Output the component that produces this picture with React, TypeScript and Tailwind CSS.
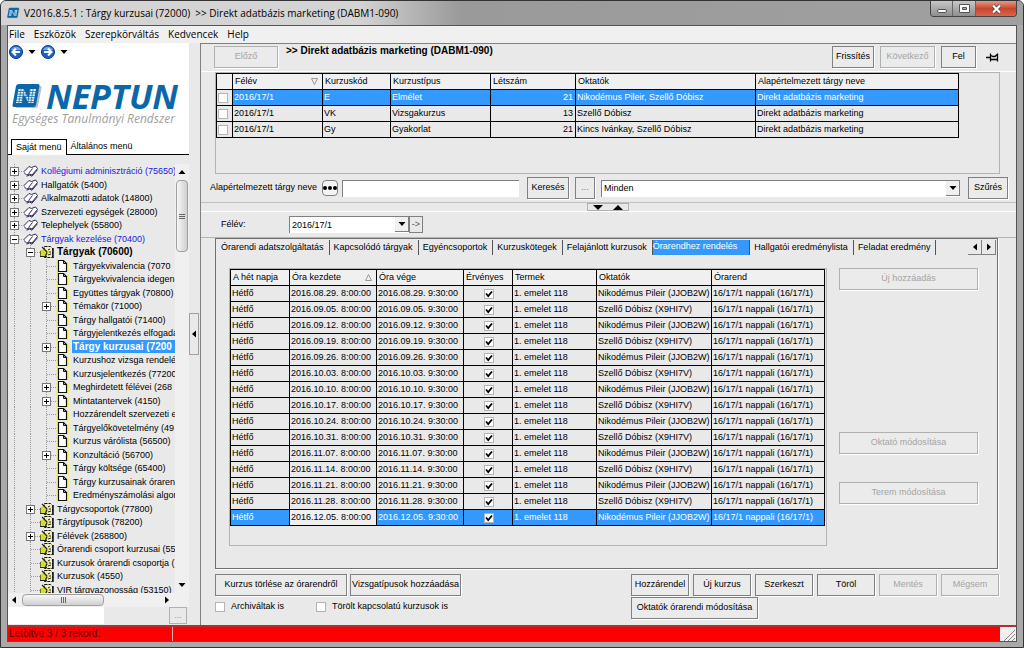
import React, { useState } from "react";

const menuItems = ["File", "Eszközök", "Szerepkörváltás", "Kedvencek", "Help"];

type Node = {
  level: number;
  label: string;
  toggle?: "+" | "-";
  kind: "book" | "folder" | "page";
  link?: boolean;
  bold?: boolean;
  active?: boolean;
};

const tree: Node[] = [
  { level: 0, label: "Kollégiumi adminisztráció (75650)", toggle: "+", kind: "book", link: true },
  { level: 0, label: "Hallgatók (5400)", toggle: "+", kind: "book" },
  { level: 0, label: "Alkalmazotti adatok (14800)", toggle: "+", kind: "book" },
  { level: 0, label: "Szervezeti egységek (28000)", toggle: "+", kind: "book" },
  { level: 0, label: "Telephelyek (55800)", toggle: "+", kind: "book" },
  { level: 0, label: "Tárgyak kezelése (70400)", toggle: "-", kind: "book", link: true },
  { level: 1, label: "Tárgyak (70600)", toggle: "-", kind: "folder", bold: true },
  { level: 2, label: "Tárgyekvivalencia (7070", kind: "page" },
  { level: 2, label: "Tárgyekvivalencia idegen", kind: "page" },
  { level: 2, label: "Együttes tárgyak (70800)", kind: "page" },
  { level: 2, label: "Témakör (71000)", toggle: "+", kind: "page" },
  { level: 2, label: "Tárgy hallgatói (71400)", kind: "page" },
  { level: 2, label: "Tárgyjelentkezés elfogadá", kind: "page" },
  { level: 2, label: "Tárgy kurzusai (7200", toggle: "+", kind: "page", bold: true, active: true },
  { level: 2, label: "Kurzushoz vizsga rendelé", kind: "page" },
  { level: 2, label: "Kurzusjelentkezés (77200", kind: "page" },
  { level: 2, label: "Meghirdetett félévei (268", kind: "page", toggle: "+" },
  { level: 2, label: "Mintatantervek (4150)", toggle: "+", kind: "page" },
  { level: 2, label: "Hozzárendelt szervezeti e", kind: "page" },
  { level: 2, label: "Tárgyelőkövetelmény (49", kind: "page" },
  { level: 2, label: "Kurzus várólista (56500)", kind: "page" },
  { level: 2, label: "Konzultáció (56700)", toggle: "+", kind: "page" },
  { level: 2, label: "Tárgy költsége (65400)", kind: "page" },
  { level: 2, label: "Tárgy kurzusainak óraren", kind: "page" },
  { level: 2, label: "Eredményszámolási algori", kind: "page" },
  { level: 1, label: "Tárgycsoportok (77800)", toggle: "+", kind: "folder" },
  { level: 1, label: "Tárgytípusok (78200)", kind: "folder" },
  { level: 1, label: "Félévek (268800)", toggle: "+", kind: "folder" },
  { level: 1, label: "Órarendi csoport kurzusai (55", kind: "folder" },
  { level: 1, label: "Kurzusok órarendi csoportja (", kind: "folder" },
  { level: 1, label: "Kurzusok (4550)", kind: "folder" },
  { level: 1, label: "VIR tárgyazonosság (53150)", kind: "folder" },
];

const courses = [
  { term: "2016/17/1", code: "E", type: "Elmélet", count: 21, teachers: "Nikodémus Pileir, Szellő Dóbisz" },
  { term: "2016/17/1", code: "VK", type: "Vizsgakurzus", count: 13, teachers: "Szellő Dóbisz" },
  { term: "2016/17/1", code: "Gy", type: "Gyakorlat", count: 21, teachers: "Kincs Ivánkay, Szellő Dóbisz" },
];

const days = [
  "2016.08.29.", "2016.09.05.", "2016.09.12.", "2016.09.19.", "2016.09.26.",
  "2016.10.03.", "2016.10.10.", "2016.10.17.", "2016.10.24.", "2016.10.31.",
  "2016.11.07.", "2016.11.14.", "2016.11.21.", "2016.11.28.", "2016.12.05.",
];

const teachers = ["Nikodémus Pileir (JJOB2W)", "Szellő Dóbisz (X9HI7V)"];

const tabs = [
  "Órarendi adatszolgáltatás",
  "Kapcsolódó tárgyak",
  "Egyéncsoportok",
  "Kurzuskötegek",
  "Felajánlott kurzusok",
  "Órarendhez rendelés",
  "Hallgatói eredménylista",
  "Feladat eredmény",
];

const BookIcon = () => (
  <svg width="16" height="14" viewBox="0 0 16 14">
    <path d="M-.5 8 5 2.500l2.500 1L11.500 2l2 2.500L8 11l-2.500-1L2.500 11z" fill="#fff" stroke="#2a2a5a" strokeWidth="1" />
    <path d="M2.500 12.200 5.500 11l2.500 1.200 5.500-6.500M4.500 9.500l4-5" fill="none" stroke="#2a2a5a" strokeWidth="1" />
  </svg>
);

const PageIcon = () => (
  <svg width="16" height="14" viewBox="0 0 16 14">
    <path d="M1.500 0v14M12 3.500v10.500" stroke="#f4f43a" strokeWidth="2" strokeDasharray="2 1" />
    <path d="M2.500 1.500h5l3 3v8h-8z" fill="#fff" stroke="#111" strokeWidth="1.200" />
    <path d="M7.500 1.500v3h3" fill="none" stroke="#111" />
  </svg>
);

const FolderIcon = () => (
  <svg width="16" height="14" viewBox="0 0 16 14">
    <path d="M4.500 1.500h6l2 2v9h-8z" fill="#f0edc0" stroke="#111" strokeDasharray="3 1" />
    <path d="M8 5l2-1M9 7h2M8 10l3-1" stroke="#222" />
    <path d="M0 5h2l1-1h2l4 3-2 4H0z" fill="#d4dc3c" />
    <path d="M0 11.500h7M2 2l5 5M0 6v5M7 7.500 5.500 11" stroke="#222" strokeWidth="1.200" />
    <path d="M13 3v10" stroke="#111" strokeWidth="1.500" />
  </svg>
);

const Toggle = ({ sign }: { sign?: "+" | "-" }) => (
  <svg width="16" height="14" viewBox="0 0 16 14" shapeRendering="crispEdges">
    <path d="M6.500 0v14M6.500 7.500h9" stroke="#999" strokeDasharray="1 1" />
    {sign && <path d="M2.500 3.500h8v8h-8z" fill="#fff" stroke="#777" />}
    {sign && <path d="M4 7.500h5" stroke="#000" />}
    {sign === "+" && <path d="M6.500 5v5" stroke="#000" />}
  </svg>
);

const Guide = () => (
  <svg width="16" height="14" viewBox="0 0 16 14" shapeRendering="crispEdges">
    <path d="M6.500 0v14" stroke="#999" strokeDasharray="1 1" />
  </svg>
);

const Arrow = ({ dir }: { dir: "up" | "down" | "left" | "right" }) => {
  const d = { up: "M.5 6h7L4 2z", down: "M.5 2h7L4 6z", left: "M6 .5v7L2 4z", right: "M2 .5v7L6 4z" }[dir];
  return (
    <svg width="8" height="8" viewBox="0 0 8 8">
      <path d={d} fill="#000" />
    </svg>
  );
};

const SplitArrow = ({ up }: { up?: boolean }) => (
  <svg width="10" height="5" viewBox="0 0 10 5">
    <path d={up ? "M0 5h10L5 0z" : "M0 0h10L5 5z"} fill="#000" />
  </svg>
);

const RoundArrow = ({ back }: { back?: boolean }) => (
  <svg width="14" height="14" viewBox="0 0 14 14">
    <circle cx="7" cy="7" r="6.500" fill="#1c5fc8" stroke="#0c3a8c" />
    <path d="M2 5a5.500 5.500 0 0 1 10 0" fill="#6ea6f0" />
    <path d={back ? "M11 7H4M7 3.500 3.500 7 7 10.500" : "M3 7h7M7 3.500 10.500 7 7 10.500"} fill="none" stroke="#fff" strokeWidth="2" />
  </svg>
);

const LogoMark = ({ className }: { className: string }) => (
  <svg className={className} viewBox="0 0 30 26">
    <path d="M8 3h20q2 0 1.500 2L26 23q-.5 2-2.500 2H4z" fill="#b9bcc0" />
    <path d="M7 1h19q2 0 1.500 2l-3.500 19q-.5 2-2.500 2H2q-2 0-1.500-2L4 3q.5-2 3-2z" fill="#0b67a8" />
    <path d="M4 20 6.500 6h5l5 9L18 6h6l-2.500 14h-5l-5-9L10 20z" fill="#e4f0f8" />
    <path d="M4 8.500h20M4 11h20M4 13.500h20M4 16h20M4 18.500h20M9.500 4 6.500 22M12.500 4 9.500 22M15.500 4l-3 18M18.500 4l-3 18M21.500 4l-3 18" stroke="#0b67a8" strokeWidth=".7" />
  </svg>
);

const Button = ({ className = "", children, ...rest }: React.ButtonHTMLAttributes<HTMLButtonElement>) => (
  <button
    className={`h-[22px] shrink-0 whitespace-nowrap border border-[#808080] bg-[#ebebeb] text-center shadow-[1px_1px_0_#fff] disabled:border-[#b0b0b0] disabled:text-[#a4a4a4] ${className}`}
    {...rest}
  >
    {children}
  </button>
);

const Check = ({ checked, label }: { checked?: boolean; label: string }) => (
  <input
    type="checkbox"
    defaultChecked={checked}
    aria-label={label}
    className="block size-[10px] appearance-none border border-[#b4b4b4] bg-white"
  />
);

const TreeRow = ({ node }: { node: Node }) => (
  <li className="flex shrink-0 items-center overflow-hidden odd:h-[14px] even:h-[13px]">
    {Array.from({ length: node.level }).map((_, i) => (
      <span key={i} className="shrink-0"><Guide /></span>
    ))}
    <span className="shrink-0"><Toggle sign={node.toggle} /></span>
    <span className="shrink-0">
      {node.kind === "book" ? <BookIcon /> : node.kind === "folder" ? <FolderIcon /> : <PageIcon />}
    </span>
    <a
      href="#"
      className={`grow whitespace-nowrap pl-px leading-[14px] ${node.link ? "text-[#2020e0]" : ""} ${
        node.bold ? "text-[10px] font-bold" : ""
      } ${node.active ? "bg-[#3399ff] text-white" : ""}`}
    >
      {node.label}
    </a>
  </li>
);

const Sidebar = () => (
  <aside className="flex w-[181px] shrink-0 flex-col">
    <div className="bg-white">
      <div className="flex h-[18px] items-center gap-[5px] pl-px">
        <button aria-label="Vissza"><RoundArrow back /></button>
        <Arrow dir="down" />
        <button aria-label="Előre"><RoundArrow /></button>
        <Arrow dir="down" />
      </div>
      <div className="mt-5 flex h-[30px] items-center gap-1 pl-1">
        <LogoMark className="h-[26px] w-[30px]" />
        <span className="font-['Open_Sans'] text-[34px] font-bold italic leading-[30px] text-[#0b67a8]">NEPTUN</span>
      </div>
      <p className="whitespace-nowrap pl-1 font-['Open_Sans'] text-[12px] italic leading-4 text-[#a0a0a0]">
        Egységes Tanulmányi Rendszer
      </p>
      <div className="mt-3 flex h-[16px] border-b border-black pl-[3px]">
        <button className="-mb-px h-[16px] border border-b-0 border-black bg-white px-1">Saját menü</button>
        <button className="px-1">Általános menü</button>
      </div>
    </div>
    <div className="mt-[9px] flex min-h-0 grow">
      <ul className="flex h-0 min-h-full w-[167px] flex-col overflow-hidden">
        {tree.map((n) => <TreeRow key={n.label} node={n} />)}
      </ul>
      <div className="flex grow flex-col items-center bg-[#f0f0f0] py-1">
        <Arrow dir="up" />
        <div className="mt-1 flex h-[72px] w-[12px] flex-col items-center justify-center gap-px rounded-sm border border-[#a0a0a0] bg-gradient-to-r from-[#f6f6f6] to-[#d0d0d0]">
          <i className="h-px w-1.5 bg-[#666]" />
          <i className="h-px w-1.5 bg-[#666]" />
          <i className="h-px w-1.5 bg-[#666]" />
        </div>
        <span className="mt-auto"><Arrow dir="down" /></span>
      </div>
    </div>
    <div className="flex h-[14px] items-center bg-[#f0f0f0] pl-[2px] pr-[18px]">
      <Arrow dir="left" />
      <div className="ml-1 flex h-[12px] w-[82px] items-center justify-center gap-px rounded-sm border border-[#a0a0a0] bg-gradient-to-b from-[#f6f6f6] to-[#d0d0d0]">
        <i className="h-1.5 w-px bg-[#666]" />
        <i className="h-1.5 w-px bg-[#666]" />
        <i className="h-1.5 w-px bg-[#666]" />
      </div>
      <span className="ml-auto"><Arrow dir="right" /></span>
    </div>
    <div className="flex h-[18px] justify-between pb-px">
      <input aria-label="Keresés a menüben" className="w-[96px] bg-white px-1" />
      <button className="mr-0.5 w-[18px] border border-[#b0b0b0] text-[#999]">...</button>
    </div>
  </aside>
);

const th = "h-4 border border-black bg-[#f0f0f0] p-0 pl-0.5 text-left font-normal leading-[15px]";
const td = "h-4 border border-black p-0 pl-px leading-[15px]";

const CourseTable = () => (
  <div className="ml-[14px] mr-[16px] h-[102px] border border-[#b4b4b4]">
    <table className="w-[743px] table-fixed border-collapse whitespace-nowrap">
      <colgroup>
        <col className="w-[16px]" /><col className="w-[90px]" /><col className="w-[68px]" /><col className="w-[100px]" />
        <col className="w-[85px]" /><col className="w-[180px]" /><col />
      </colgroup>
      <thead>
        <tr>
          <th className={th} aria-label="Kijelölés" />
          <th className={th}>
            <span className="flex items-center justify-between pr-1">
              Félév
              <svg width="7" height="7" viewBox="0 0 7 7"><path d="M.5.5h6l-3 6z" fill="none" stroke="#999" /></svg>
            </span>
          </th>
          <th className={th}>Kurzuskód</th>
          <th className={th}>Kurzustípus</th>
          <th className={th}>Létszám</th>
          <th className={th}>Oktatók</th>
          <th className={th}>Alapértelmezett tárgy neve</th>
        </tr>
      </thead>
      <tbody>
        {courses.map((c, i) => (
          <tr key={c.code} className={i === 0 ? "bg-[#3399ff] text-white" : ""}>
            <td className={`${td} bg-[#e9e9e9] pl-0.5`}><Check label={`${c.code} kijelölése`} /></td>
            <td className={td}>{c.term}</td>
            <td className={td}>{c.code}</td>
            <td className={td}>{c.type}</td>
            <td className={`${td} pr-0.5 text-right`}>{c.count}</td>
            <td className={td}>{c.teachers}</td>
            <td className={td}>Direkt adatbázis marketing</td>
          </tr>
        ))}
      </tbody>
    </table>
  </div>
);

const ScheduleTable = () => (
  <div className="h-[278px] w-[598px] shrink-0 border border-[#b4b4b4]">
    <table className="w-[595px] table-fixed border-collapse whitespace-nowrap">
      <colgroup>
        <col className="w-[59px]" /><col className="w-[87px]" /><col className="w-[87px]" /><col className="w-[49px]" />
        <col className="w-[84px]" /><col className="w-[115px]" /><col />
      </colgroup>
      <thead>
        <tr>
          <th className={th}>A hét napja</th>
          <th className={th}>
            <span className="flex items-center justify-between pr-1">
              Óra kezdete
              <svg width="7" height="7" viewBox="0 0 7 7"><path d="M.5 6.500h6l-3-6z" fill="none" stroke="#999" /></svg>
            </span>
          </th>
          <th className={th}>Óra vége</th>
          <th className={th}>Érvényes</th>
          <th className={th}>Termek</th>
          <th className={th}>Oktatók</th>
          <th className={th}>Órarend</th>
        </tr>
      </thead>
      <tbody>
        {days.map((d, i) => {
          const last = i === days.length - 1;
          return (
            <tr key={d} className={last ? "bg-[#3399ff] text-white" : ""}>
              <td className={td}>Hétfő</td>
              <td className={`${td} ${last ? "bg-[#f0f0f0] text-black" : ""}`}>{d} 8:00:00</td>
              <td className={td}>{d} 9:30:00</td>
              <td className={td}>
                <span className="relative mx-auto block size-[10px]">
                  <Check checked label={`${d} érvényes`} />
                  <svg className="pointer-events-none absolute inset-0" width="10" height="10" viewBox="0 0 10 10">
                    <path d="M2 4.500 4.200 7 8 2.500" fill="none" stroke="#000" strokeWidth="1.800" />
                  </svg>
                </span>
              </td>
              <td className={`${td} pl-1`}>1. emelet 118</td>
              <td className={td}>{teachers[i % 2]}</td>
              <td className={td}>16/17/1 nappali (16/17/1)</td>
            </tr>
          );
        })}
      </tbody>
    </table>
  </div>
);

const Dropdown = ({ id, value, label, className }: { id: string; value: string; label?: string; className: string }) => (
  <div className={`relative ${className}`}>
    <select
      id={id}
      aria-label={label}
      className="block h-[17px] w-full appearance-none border-l border-t border-[#808080] bg-white pl-0.5 leading-[15px]"
    >
      <option>{value}</option>
    </select>
    <span className="pointer-events-none absolute right-0 top-px flex h-[15px] w-[14px] items-center justify-center border-b border-r border-[#808080] bg-[#f0f0f0]">
      <Arrow dir="down" />
    </span>
  </div>
);

export default function App() {
  const [tab, setTab] = useState(5);

  return (
    <div className="flex h-screen flex-col overflow-hidden rounded-t-md border border-[#333] bg-[#a9a9a9] px-[6px] pb-[5px] font-['Liberation_Sans',sans-serif] text-[9px] text-black">
      <header className="-mx-[6px] flex h-[24px] shrink-0 justify-between bg-gradient-to-r from-[#d4d4d4] from-35% via-[#9a9a9a] via-45% to-[#a0a0a0] px-[6px]">
        <div className="flex items-center gap-1 font-['Open_Sans'] text-[10px]">
          <LogoMark className="h-[12px] w-[13px]" />
          <h1 className="whitespace-pre">V2016.8.5.1 : Tárgy kurzusai (72000)  &gt;&gt; Direkt adatbázis marketing (DABM1-090)</h1>
        </div>
        <div className="flex h-[16px] overflow-hidden rounded-b border border-t-0 border-[#444]">
          <button aria-label="Kis méret" className="flex w-[22px] items-center justify-center border-r border-[#666] bg-gradient-to-b from-[#c8c8c8] to-[#8e8e8e]">
            <span className="mt-1 h-[4px] w-[10px] rounded-sm border border-[#555] bg-white" />
          </button>
          <button aria-label="Teljes méret" className="flex w-[23px] items-center justify-center border-r border-[#666] bg-gradient-to-b from-[#c8c8c8] to-[#8e8e8e]">
            <svg width="11" height="9" viewBox="0 0 11 9">
              <path d="M.5.5h10v8H.5z" fill="#fff" stroke="#555" />
              <path d="M3.500 3.500h4v2h-4z" fill="#aaa" stroke="#555" />
            </svg>
          </button>
          <button aria-label="Bezárás" className="flex w-[40px] items-center justify-center bg-gradient-to-b from-[#e09a88] via-[#c8452c] to-[#d8654a]">
            <svg width="11" height="10" viewBox="0 0 11 10">
              <path d="M2 1.500 9 8.500M9 1.500 2 8.500" stroke="#444" strokeWidth="3.600" />
              <path d="M2 1.500 9 8.500M9 1.500 2 8.500" stroke="#fff" strokeWidth="2.200" />
            </svg>
          </button>
        </div>
      </header>

      <div className="flex min-h-0 grow flex-col border border-[#555] bg-[#e9e9e9]">
        <nav className="flex h-[17px] shrink-0 items-center gap-[9px] bg-[#f0f0f0] pl-px font-['Open_Sans'] text-[10px]">
          {menuItems.map((m) => <button key={m}>{m}</button>)}
        </nav>

        <div className="flex min-h-0 grow">
          <Sidebar />
          <div className="flex w-[11px] shrink-0 items-center">
            <button aria-label="Menü elrejtése" className="flex h-[42px] w-[10px] items-center justify-center border border-[#a0a0a0]">
              <Arrow dir="left" />
            </button>
          </div>

          <main className="flex min-w-0 grow flex-col border-l border-t border-[#808080]">
            <div className="flex h-[28px] shrink-0 items-start border-b border-white pl-[13px] pr-[17px] pt-[2px]">
              <Button disabled className="w-[64px]">Előző</Button>
              <h2 className="pl-2 text-[10px] font-bold leading-[10px]">
                &gt;&gt; Direkt adatbázis marketing (DABM1-090)
              </h2>
              <Button className="ml-auto w-[42px]">Frissítés</Button>
              <Button disabled className="ml-1.5 w-[55px]">Következő</Button>
              <Button className="ml-1.5 w-[35px]">Fel</Button>
              <svg className="ml-2.5 mt-1.5" width="13" height="11" viewBox="0 0 13 11">
                <path d="M0 5.500h4M4.500 1.500v8M5 3.500l2 1h2l2-2M5 7.500h6M11.500 1.500v8" fill="none" stroke="#000" strokeWidth="1.300" />
              </svg>
            </div>

            <CourseTable />

            <div className="flex h-[29px] shrink-0 items-center border-b border-[#c0c0c0] pl-[9px] pr-[8px]">
              <label htmlFor="nev" className="w-[112px] whitespace-nowrap">Alapértelmezett tárgy neve</label>
              <button aria-label="Keresési mód" className="flex size-4 items-center justify-center gap-px rounded-sm border border-[#808080] bg-[#f4f4f4]">
                <i className="size-[4px] rounded-full bg-black" />
                <i className="size-[4px] rounded-full bg-black" />
                <i className="size-[4px] rounded-full bg-black" />
              </button>
              <input id="nev" className="ml-1 h-[17px] w-[177px] border-l border-t border-[#808080] bg-white px-1" />
              <Button className="ml-2 h-[20px] w-[42px]">Keresés</Button>
              <Button className="ml-1.5 h-[20px] w-[20px] text-[#777]">...</Button>
              <Dropdown id="szuro" label="Szűrő" value="Minden" className="ml-1.5 mr-2 grow" />
              <Button className="h-[20px] w-[40px]">Szűrés</Button>
            </div>

            <div className="flex h-[9px] shrink-0 border-b border-white pl-[386px]">
              <button aria-label="Panel mérete" className="flex w-[42px] items-center justify-center gap-2.5 border border-[#b0b0b0]">
                <SplitArrow />
                <SplitArrow up />
              </button>
            </div>

            <div className="flex h-[26px] shrink-0 items-center border-b border-[#b4b4b4] pl-[20px]">
              <label htmlFor="felev" className="w-[68px]">Félév:</label>
              <Dropdown id="felev" value="2016/17/1" className="w-[120px]" />
              <button className="h-[17px] w-[14px] border border-[#808080] text-[#555]">-&gt;</button>
            </div>

            <section className="ml-[14px] mr-[18px] flex grow flex-col border border-[#707070] p-px shadow-[1px_1px_0_#fff]">
              <div role="tablist" className="flex h-[15px] shrink-0">
                {tabs.map((t, i) => (
                  <button
                    key={t}
                    role="tab"
                    aria-selected={i === tab}
                    onClick={() => setTab(i)}
                    className={`whitespace-nowrap border-r border-[#555] ${
                      i === tab ? "bg-[#3399ff] pb-0.5 pr-3 text-white" : "pl-1 pr-[5px]"
                    }`}
                  >
                    {t}
                  </button>
                ))}
                <div className="ml-auto flex">
                  <button aria-label="Előző fül" className="flex w-[14px] items-center justify-center border-b border-r border-[#808080]"><Arrow dir="left" /></button>
                  <button aria-label="Következő fül" className="flex w-[14px] items-center justify-center border-b border-r border-[#808080]"><Arrow dir="right" /></button>
                </div>
              </div>
              <div className="flex gap-3 pl-[12px] pr-[18px] pt-[13px]">
                <ScheduleTable />
                <div className="flex grow flex-col">
                  <Button disabled>Új hozzáadás</Button>
                  <Button disabled className="mt-[142px]">Oktató módosítása</Button>
                  <Button disabled className="mt-7">Terem módosítása</Button>
                </div>
              </div>
            </section>

            <footer className="flex h-[56px] shrink-0 justify-between pl-[14px] pr-[17px] pt-[5px]">
              <div>
                <div className="flex gap-[3px]">
                  <Button className="w-[132px]">Kurzus törlése az órarendről</Button>
                  <Button className="w-[111px]">Vizsgatípusok hozzáadása</Button>
                </div>
                <div className="mt-1 flex gap-8">
                  <label className="flex items-center gap-1.5"><Check label="Archiváltak is" />Archiváltak is</label>
                  <label className="flex items-center gap-1.5"><Check label="Törölt kapcsolatú kurzusok is" />Törölt kapcsolatú kurzusok is</label>
                </div>
              </div>
              <div>
                <div className="flex gap-1">
                  <Button className="w-[58px]">Hozzárendel</Button>
                  <Button className="w-[58px]">Új kurzus</Button>
                  <Button className="w-[58px]">Szerkeszt</Button>
                  <Button className="w-[58px]">Töröl</Button>
                  <Button disabled className="w-[58px]">Mentés</Button>
                  <Button disabled className="w-[58px]">Mégsem</Button>
                </div>
                <Button className="mt-px w-[127px]">Oktatók órarendi módosítása</Button>
              </div>
            </footer>
          </main>
        </div>

        <div className="flex h-[16px] shrink-0 border-t-2 border-[#b03030] bg-[#ff0000] text-[10px] leading-[14px] text-[#5a0000]">
          <span className="w-[165px] border-r border-[#ffb0b0] pl-px">Letöltve 3 / 3 rekord.</span>
          <svg className="ml-auto bg-[#f0f0f0]" width="16" height="14" viewBox="0 0 16 14">
            <path d="M4 14 15 3M8 14l7-7M12 14l3-3" stroke="#888" />
          </svg>
        </div>
      </div>
    </div>
  );
}
